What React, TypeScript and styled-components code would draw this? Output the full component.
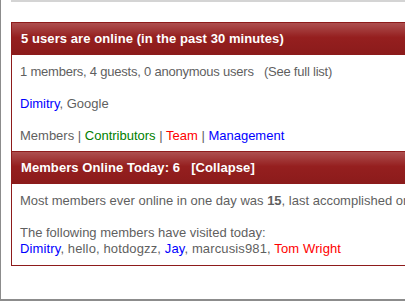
import React from "react";
import styled, { createGlobalStyle } from "styled-components";

const Global = createGlobalStyle`
  html, body { margin: 0; padding: 0; background: #fff; overflow: hidden; }
  body { font-family: "Liberation Sans", Arial, sans-serif; }
`;

const Frame = styled.div`
  width: 404px;
  height: 299px;
  border-left: 1px solid #8c8c8c;
  border-bottom: 2px solid #8c8c8c;
  overflow: hidden;
  padding-left: 10px;
`;

const TopBar = styled.div`
  height: 2px;
  background: #d4d4d4;
  margin-bottom: 20px;
`;

const Panel = styled.section`
  width: 520px;
  border: 1px solid #8e1b1b;
  border-top: none;
`;

const Header = styled.div`
  height: 32px;
  border-top: 1px solid #8e1b1b;
  background: linear-gradient(#ad4f4f 0%, #951f1f 45%, #8b1b1b 100%);
  color: #fff;
  font-weight: bold;
  font-size: 13px;
  letter-spacing: 0.08px;
  line-height: 32px;
  padding-left: 9px;
  white-space: pre;
`;

const Body = styled.div<{ $pb: number }>`
  padding: 9px 8px ${(p) => p.$pb}px;
  color: #5f5f5f;
  font-size: 13px;
  line-height: 16px;
  white-space: nowrap;
`;

const Para = styled.p<{ $ls?: number }>`
  margin: 0 0 16px;
  letter-spacing: ${(p) => p.$ls ?? 0}px;
  &:last-child { margin-bottom: 0; }
`;

const Line = styled.span<{ $ls?: number }>`
  display: block;
  letter-spacing: ${(p) => p.$ls ?? 0}px;
`;

const Name = styled.span<{ $c: string }>`
  color: ${(p) => p.$c};
`;

export default function App() {
  return (
    <>
      <Global />
      <Frame>
        <TopBar />
        <Panel>
          <Header>5 users are online (in the past 30 minutes)</Header>
          <Body $pb={7}>
            <Para $ls={-0.22}>1 members, 4 guests, 0 anonymous users&nbsp;&nbsp;&nbsp;(See full list)</Para>
            <Para>
              <Name $c="#0000ff">Dimitry</Name>, Google
            </Para>
            <Para>
              Members | <Name $c="#008000">Contributors</Name> | <Name $c="#ff0000">Team</Name> |{" "}
              <Name $c="#0000ff">Management</Name>
            </Para>
          </Body>
          <Header>{"Members Online Today: 6   [Collapse]"}</Header>
          <Body $pb={8}>
            <Para>
              Most members ever online in one day was <b>15</b>, last accomplished on 12-05-2012 at 10:42 PM.
            </Para>
            <Para>
              <Line>The following members have visited today:</Line>
              <Line $ls={0.13}>
                <Name $c="#0000ff">Dimitry</Name>, hello, hotdogzz, <Name $c="#0000ff">Jay</Name>, marcusis981,{" "}
                <Name $c="#ff0000">Tom Wright</Name>
              </Line>
            </Para>
          </Body>
        </Panel>
      </Frame>
    </>
  );
}
